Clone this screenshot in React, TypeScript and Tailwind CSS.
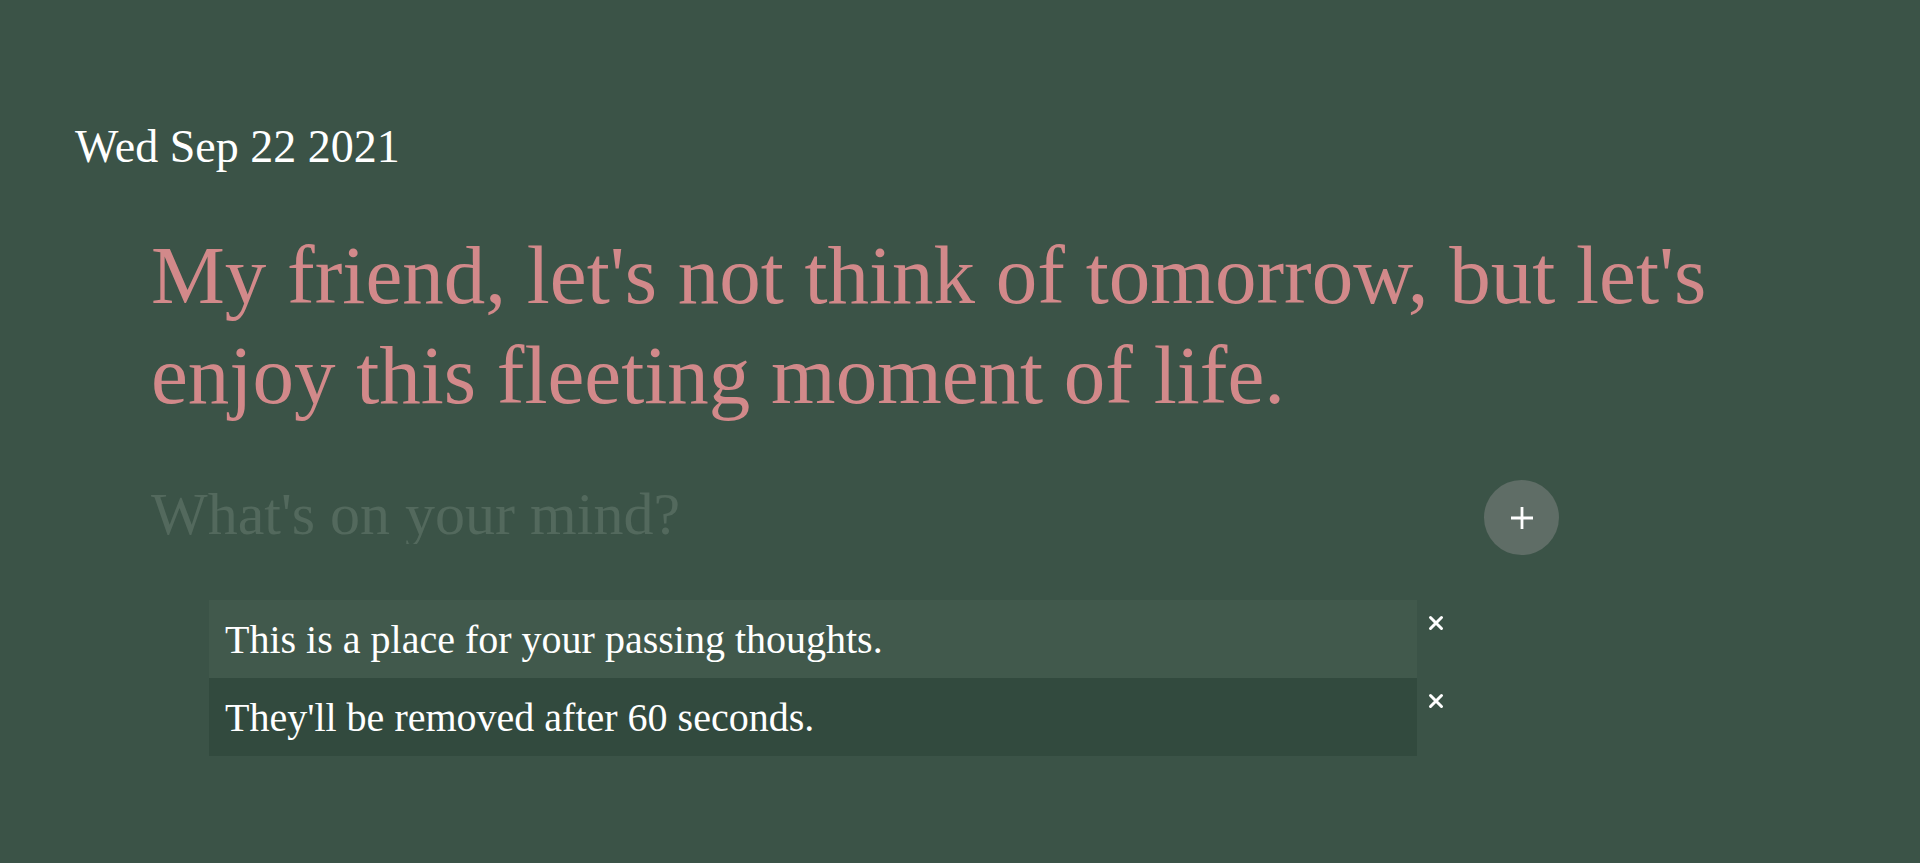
import React, { useState } from "react";

const serif = "font-['Liberation_Serif','Times_New_Roman',serif]";

const CloseIcon = () => (
  <svg width="16" height="16" viewBox="0 0 16 16" fill="none">
    <path d="M2.5 2.5L13.5 13.5M13.5 2.5L2.5 13.5" stroke="white" strokeWidth="3" strokeLinecap="round" />
  </svg>
);

const PlusIcon = () => (
  <svg width="24" height="24" viewBox="0 0 24 24" fill="none">
    <path d="M12 1V23M1 12H23" stroke="white" strokeWidth="2.8" />
  </svg>
);

const Note = ({ text, shade, onRemove }: { text: string; shade: string; onRemove: () => void }) => (
  <div className="flex items-start">
    <div className={`w-[1208px] h-[78px] px-[16px] pt-[20px] text-[40px] leading-none text-white ${shade}`}>
      {text}
    </div>
    <button onClick={onRemove} className="ml-[11px] mt-[15px] w-[16px] h-[16px] flex items-center justify-center">
      <CloseIcon />
    </button>
  </div>
);

export default function App() {
  const [notes, setNotes] = useState([
    "This is a place for your passing thoughts.",
    "They'll be removed after 60 seconds.",
  ]);
  const [draft, setDraft] = useState("");

  const add = () => {
    if (!draft.trim()) return;
    setNotes([...notes, draft.trim()]);
    setDraft("");
  };

  return (
    <div className={`min-h-screen w-full bg-[#3b5347] ${serif} px-[75px] pt-[124px] pb-10`}>
      <div className="text-[46px] leading-none text-white">Wed Sep 22 2021</div>

      <div className="ml-[76px] mt-[55px]">
        <p className="text-[83px] leading-[100px] text-[#d2898a] w-[1600px]">
          My friend, let's not think of tomorrow, but let's enjoy this fleeting moment of life.
        </p>

        {/* input row */}
        <div className="mt-[55px] flex items-start h-[75px]">
          <input
            value={draft}
            onChange={(e) => setDraft(e.target.value)}
            onKeyDown={(e) => e.key === "Enter" && add()}
            placeholder="What's on your mind?"
            className={`mt-[4px] w-[1333px] h-[60px] bg-transparent outline-none border-0 p-0 text-[60px] leading-[60px] text-white placeholder:text-[#53695d] ${serif}`}
          />
          <button
            onClick={add}
            className="w-[75px] h-[75px] shrink-0 rounded-full bg-[#5f6d66] flex items-center justify-center"
          >
            <PlusIcon />
          </button>
        </div>

        {/* notes */}
        <div className="ml-[58px] mt-[45px] flex flex-col">
          {notes.map((n, i) => (
            <Note
              key={n + i}
              text={n}
              shade={i % 2 === 0 ? "bg-[#41594c]" : "bg-[#324a3e]"}
              onRemove={() => setNotes(notes.filter((_, j) => j !== i))}
            />
          ))}
        </div>
      </div>
    </div>
  );
}
